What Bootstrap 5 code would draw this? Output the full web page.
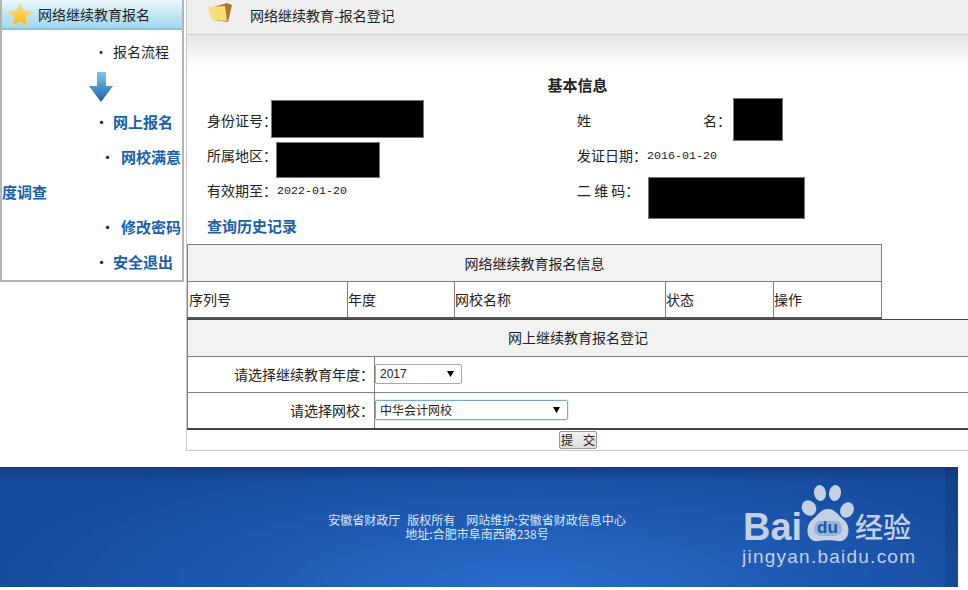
<!DOCTYPE html>
<html lang="zh"><head><meta charset="utf-8"><title>网络继续教育报名</title>
<link href="https://cdn.jsdelivr.net/npm/bootstrap@5.3.0/dist/css/bootstrap.min.css" rel="stylesheet">
<style>
html,body{height:590px;overflow:hidden}
body{font-family:"Noto Sans CJK SC","Liberation Sans",sans-serif;font-size:14px;color:#222;background:#fff;line-height:1.2}
.side-panel{width:184px;height:282px;flex:none;border:2px solid #b4b4b4;border-top:0}
.side-head{height:30px;background:linear-gradient(#eef9fd,#c5e8f6 45%,#a5d8ee);border-bottom:2px solid #8dc4da;gap:5px;padding-left:5px;margin-bottom:4px}
.side-item{line-height:35px;height:35px;color:#222;text-decoration:none;display:block}
.side-wrap{height:70px;margin:0}
.side-link{color:#1a5fa8;font-weight:700;font-size:15px;text-decoration:none;display:block;line-height:35px}
.ind-a{text-indent:92px}.ind-b{text-indent:98px}
.dot{display:inline-block;width:19px;text-indent:0;font-weight:400;color:#222}
.ind-b .dot{width:21px}
.arrow-row{height:35px;padding:3px 0 0 87px}
.main-panel{width:782px;height:451px;margin-left:2px;border-left:1px solid #c8c8c8;border-bottom:1px solid #c8c8c8}
.main-head{height:35px;background:#eee;border-bottom:1px solid #d0d0d0;padding-left:20px;gap:17px}
.head-text{margin-bottom:4px}
.main-fade{height:34px;background:linear-gradient(#e6e6e6,#fff)}
.info-title{height:34px;line-height:32px;font-weight:700;font-size:15px;text-align:center}
.info-row{height:35px;padding-left:20px}
.info-cell{width:370px}
.mono{font-family:"Liberation Mono",monospace;font-size:11.67px;margin-top:1px}
.hide-box{background:#000;border:1px solid #777;flex:none}
.box-id{width:153px;height:38px;margin-left:-6px;margin-bottom:4px}
.box-name{width:50px;height:43px;margin-left:2px;margin-bottom:2px}
.box-area{width:104px;height:36px;margin-left:-1px;margin-top:9px}
.box-code{width:157px;height:42px;margin-left:9px;margin-top:15px}
.name-gap{width:112px}
.history{color:#1a5fa8;font-weight:700;font-size:15px;text-decoration:none}
.grid-a,.grid-b{border-collapse:collapse;table-layout:fixed}
.grid-a{width:694px;margin-top:1px}
.grid-a td,.grid-a th{border:1px solid #808080;height:37px;padding:0;font-weight:400}
.grid-a td:first-child{padding-left:1px}
.grid-a tr:last-child td{border-bottom:2px solid #555;height:36px}
.grid-head{background:#f2f2f2;text-align:center}
.grid-b{width:781px}
.grid-b td,.grid-b th{border:1px solid #808080;height:36px;padding:0;font-weight:400}
.grid-b tr:last-child td{border-bottom:2px solid #444;height:37px}
.grid-b th.grid-head{height:37px;border-top:1px solid #444}
.lab{text-align:right}
.pick{font-size:12px;height:20px;border:1px solid #aaa;border-radius:2px;padding:0 0 0 4px;color:#222;display:block;margin-left:0;appearance:none;background:#fff url("data:image/svg+xml,%3Csvg xmlns='http://www.w3.org/2000/svg' width='7' height='6'%3E%3Cpath d='M0 0H7L3.5 6Z'/%3E%3C/svg%3E") no-repeat right 7px center}
.pick-year{width:87px;font-family:"Liberation Sans",sans-serif}
.pick-school{width:193px;border-color:#7aa7cf;box-shadow:0 0 2px #9cc3e4;font-family:"Noto Sans CJK SC",sans-serif}
.send-row{height:20px;padding-top:1px}
.send-btn{width:38px;height:18px;padding:0;font-size:12.5px;line-height:16px;background:linear-gradient(#f4f4f4,#dcdcdc);border:1px solid #999;border-radius:2px;color:#222;display:block;margin:0 0 0 372px;word-spacing:2px}
.foot{width:958px;height:120px;margin-top:16px;position:relative;color:#dde8f7;font-size:12px;line-height:14px;text-align:center;padding:46px 4px 0 0;
background:linear-gradient(90deg,transparent 945px,rgba(0,0,0,.1) 945px),linear-gradient(#123d87,rgba(18,61,135,0) 14px),radial-gradient(ellipse 560px 150px at 55% 100%,#2a6dcc,#1c56ad 60%,#164a9b)}
.foot p{margin:0}
.foot .sp1{margin-left:7px}.foot .sp2{margin-left:11px}
.logo{position:absolute;left:742px;top:18px;width:176px;height:84px}
.logo-svg{display:block}
</style></head>
<body>
<div class="d-flex">
  <aside class="side-panel">
    <div class="side-head d-flex align-items-center">
      <svg width="26" height="25" viewBox="0 0 26 25"><defs><linearGradient id="st" x1="0" y1="0" x2="0" y2="1"><stop offset="0" stop-color="#ffe680"/><stop offset="1" stop-color="#f3b41b"/></linearGradient></defs><polygon points="13,1 16.6,9 25,9.8 18.8,15.4 20.8,24 13,19.6 5.2,24 7.2,15.4 1,9.8 9.4,9" fill="url(#st)" stroke="#e8d9a0" stroke-width="1" stroke-linejoin="round"/></svg>
      <span>网络继续教育报名</span>
    </div>
    <div class="side-item ind-a"><span class="dot">·</span>报名流程</div>
    <div class="arrow-row">
      <svg width="24" height="30" viewBox="0 0 24 30"><defs><linearGradient id="ar2" x1="0" y1="0" x2="0" y2="1"><stop offset="0" stop-color="#7cc8ef"/><stop offset="1" stop-color="#1f5fa8"/></linearGradient></defs><path d="M8 0H17V14H24L12 30 0 14H8Z" fill="url(#ar2)"/></svg>
    </div>
    <a class="side-link ind-a" href="#"><span class="dot">·</span>网上报名</a>
    <a class="side-link ind-b side-wrap" href="#"><span class="dot">·</span>网校满意度调查</a>
    <a class="side-link ind-b" href="#"><span class="dot">·</span>修改密码</a>
    <a class="side-link ind-a" href="#"><span class="dot">·</span>安全退出</a>
  </aside>
  <main class="main-panel">
    <div class="main-head d-flex align-items-center">
      <svg width="26" height="22" viewBox="0 0 26 22" class="mb-2"><path d="M3 6 20 1 25 3 21 20 6 18Z" fill="#a8782c"/><path d="M1 5 18 4 20 19 5 18Z" fill="#f8de74"/></svg>
      <span class="head-text">网络继续教育-报名登记</span>
    </div>
    <div class="main-fade"></div>
    <div class="info-title">基本信息</div>
    <div class="info-row d-flex align-items-center">
      <div class="info-cell d-flex align-items-center"><span>身份证号：</span><span class="hide-box box-id"></span></div>
      <div class="d-flex align-items-center"><span>姓</span><span class="name-gap"></span><span>名：</span><span class="hide-box box-name"></span></div>
    </div>
    <div class="info-row d-flex align-items-center">
      <div class="info-cell d-flex align-items-center"><span>所属地区：</span><span class="hide-box box-area"></span></div>
      <div class="d-flex align-items-center"><span>发证日期：</span><span class="mono">2016-01-20</span></div>
    </div>
    <div class="info-row d-flex align-items-center">
      <div class="info-cell d-flex align-items-center"><span>有效期至：</span><span class="mono">2022-01-20</span></div>
      <div class="d-flex align-items-center"><span>二 维 码：</span><span class="hide-box box-code"></span></div>
    </div>
    <div class="info-row d-flex align-items-center"><a class="history" href="#">查询历史记录</a></div>
    <table class="grid-a">
      <colgroup><col style="width:160px"><col style="width:107px"><col style="width:211px"><col style="width:108px"><col style="width:108px"></colgroup>
      <tr><th class="grid-head" colspan="5">网络继续教育报名信息</th></tr>
      <tr><td>序列号</td><td>年度</td><td>网校名称</td><td>状态</td><td>操作</td></tr>
    </table>
    <table class="grid-b">
      <colgroup><col style="width:187px"><col style="width:594px"></colgroup>
      <tr><th class="grid-head" colspan="2">网上继续教育报名登记</th></tr>
      <tr><td class="lab">请选择继续教育年度：</td><td><select class="pick pick-year"><option>2017</option></select></td></tr>
      <tr><td class="lab">请选择网校：</td><td><select class="pick pick-school"><option>中华会计网校</option></select></td></tr>
    </table>
    <div class="send-row"><button class="send-btn" type="button">提&nbsp; 交</button></div>
  </main>
</div>
<footer class="foot">
  <p>安徽省财政厅<span class="sp1">版权所有</span><span class="sp2">网站维护:安徽省财政信息中心</span></p>
  <p>地址:合肥市阜南西路238号</p>
  <div class="logo">
    <svg class="logo-svg" width="176" height="84" viewBox="0 0 176 84">
      <g fill="#c3d0e6">
        <ellipse cx="78" cy="8" rx="6" ry="8" transform="rotate(-8 78 8)"/>
        <ellipse cx="93" cy="8" rx="6" ry="8" transform="rotate(8 93 8)"/>
        <ellipse cx="67" cy="23" rx="7" ry="8" transform="rotate(-30 67 23)"/>
        <ellipse cx="105" cy="25" rx="6.5" ry="8" transform="rotate(30 105 25)"/>
        <path d="M86 24C93 24 96 30 102 35 110 42 107 58 96 56 91 55 81 55 76 56 65 58 62 42 70 35 76 30 79 24 86 24Z"/>
      </g>
      <rect x="72" y="36" width="28" height="15" rx="7" fill="#1c56ad" opacity=".25"/>
      <text x="85.5" y="48" text-anchor="middle" font-family="Liberation Sans" font-size="17" font-weight="700" fill="#1c56ad">du</text>
      <text x="1" y="55" font-family="Liberation Sans" font-size="38" font-weight="700" fill="#c3d0e6" textLength="59" lengthAdjust="spacingAndGlyphs">Bai</text>
      <text x="113" y="53" font-family="Noto Sans CJK SC" font-size="28" font-weight="500" fill="#c3d0e6">经验</text>
      <text x="0" y="78" font-family="Liberation Sans" font-size="19" fill="#c3d0e6" textLength="173">jingyan.baidu.com</text>
    </svg>
  </div>
</footer>
<script src="https://cdn.jsdelivr.net/npm/bootstrap@5.3.0/dist/js/bootstrap.bundle.min.js"></script>
</body></html>
